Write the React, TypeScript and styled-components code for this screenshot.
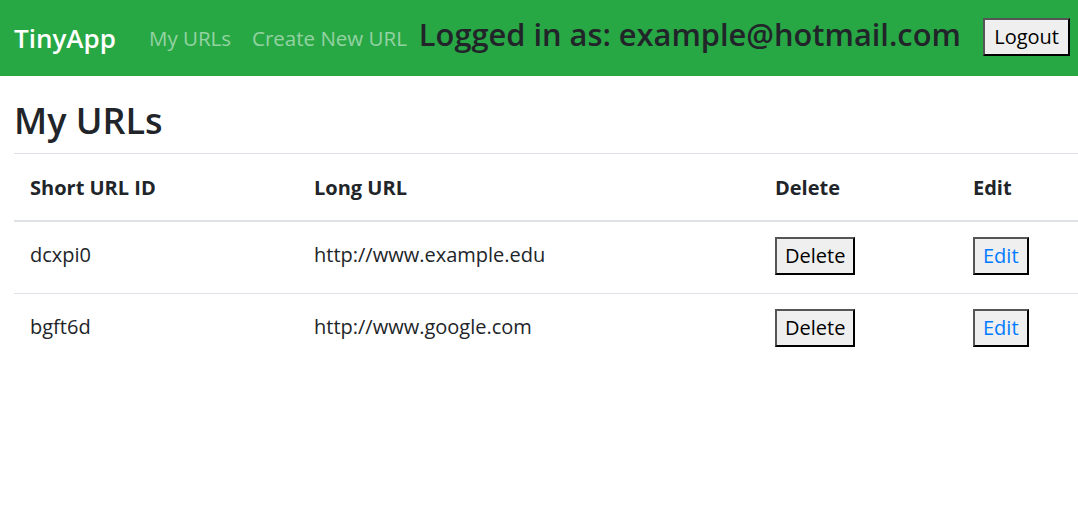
import React from "react";
import styled, { createGlobalStyle } from "styled-components";

const Global = createGlobalStyle`
  html, body { margin: 0; padding: 0; background: #fff; }
  body {
    font-family: "Open Sans", "Noto Sans", sans-serif;
    color: #212529;
    font-size: 20px;
    line-height: 1.5;
  }
  * { box-sizing: border-box; }
`;

const NavBar = styled.nav`
  height: 76px;
  background: #28a745;
  display: flex;
  align-items: center;
  padding: 0 8px 0 14px;
  white-space: nowrap;
`;

const Brand = styled.a`
  font-size: 26px;
  font-weight: 600;
  color: #fff;
  text-decoration: none;
  margin-right: 33px;
  flex-shrink: 0;
`;

const NavLink = styled.a`
  font-size: 20.5px;
  color: rgba(255, 255, 255, 0.5);
  text-decoration: none;
  margin-right: 21px;
  flex-shrink: 0;
`;

const LoggedIn = styled.h3`
  margin: 0 0 8px -9px;
  font-size: 30.8px;
  font-weight: 600;
  line-height: 1.2;
  color: #212529;
  flex-shrink: 0;
`;

const Button = styled.button<{ $link?: boolean }>`
  font-family: inherit;
  font-size: 20px;
  line-height: 30px;
  height: 38px;
  padding: 2px 8px;
  background: #efefef;
  color: ${(p) => (p.$link ? "#007bff" : "#000")};
  border-style: solid;
  border-width: 2px;
  border-color: #555 #000 #000 #555;
  border-radius: 0;
  cursor: pointer;
  vertical-align: top;
`;

const LogoutButton = styled(Button)`
  margin-left: auto;
  margin-top: -2px;
  padding: 2px 9px;
  flex-shrink: 0;
`;

const Main = styled.main`
  padding-left: 14px;
`;

const Title = styled.h2`
  margin: 0;
  padding-top: 23px;
  font-size: 36px;
  font-weight: 600;
  line-height: 1.2;
  height: 77px;
`;

const Table = styled.table`
  width: 1064px;
  border-collapse: collapse;
`;

const Th = styled.th<{ $w?: number }>`
  text-align: left;
  font-weight: 700;
  padding: 19px 16px 17px;
  border-top: 1px solid #dee2e6;
  border-bottom: 2px solid #dee2e6;
  line-height: 30px;
  width: ${(p) => (p.$w ? `${p.$w}px` : "auto")};
`;

const Td = styled.td`
  padding: 18px 16px 23px;
  border-top: 1px solid #dee2e6;
  vertical-align: top;
  line-height: 30px;
`;

const BtnCell = styled(Td)`
  padding-top: 15px;
  padding-bottom: 18px;
`;

const rows = [
  { id: "dcxpi0", url: "http://www.example.edu" },
  { id: "bgft6d", url: "http://www.google.com" },
];

export default function App() {
  return (
    <>
      <Global />
      <NavBar>
        <Brand href="#">TinyApp</Brand>
        <NavLink href="#">My URLs</NavLink>
        <NavLink href="#">Create New URL</NavLink>
        <LoggedIn>Logged in as: example@hotmail.com</LoggedIn>
        <LogoutButton>Logout</LogoutButton>
      </NavBar>
      <Main>
        <Title>My URLs</Title>
        <Table>
          <thead>
            <tr>
              <Th $w={284}>Short URL ID</Th>
              <Th $w={461}>Long URL</Th>
              <Th $w={198}>Delete</Th>
              <Th>Edit</Th>
            </tr>
          </thead>
          <tbody>
            {rows.map((r) => (
              <tr key={r.id}>
                <Td>{r.id}</Td>
                <Td>{r.url}</Td>
                <BtnCell>
                  <Button>Delete</Button>
                </BtnCell>
                <BtnCell>
                  <Button $link>Edit</Button>
                </BtnCell>
              </tr>
            ))}
          </tbody>
        </Table>
      </Main>
    </>
  );
}
